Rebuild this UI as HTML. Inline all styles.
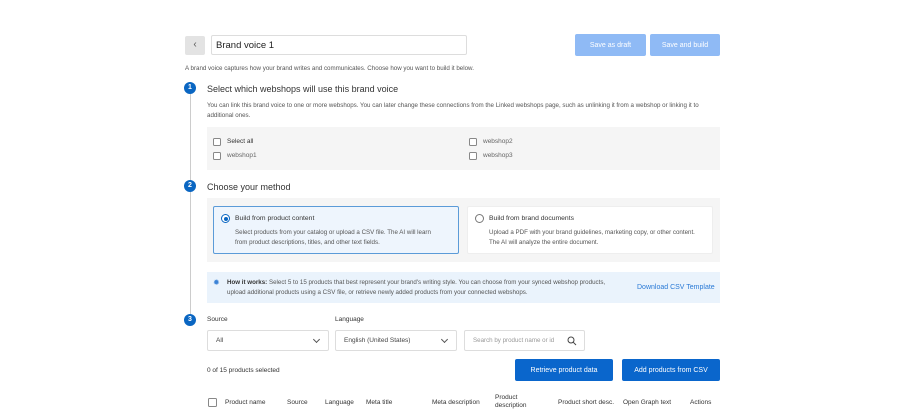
<!DOCTYPE html>
<html><head><style>
*{box-sizing:border-box;margin:0;padding:0}
body{width:910px;height:415px;background:#fff;font-family:"Liberation Sans",sans-serif;color:#333;position:relative;overflow:hidden}
.a{position:absolute}
.cb{position:absolute;width:8px;height:8px;border:1px solid #888;border-radius:1.5px;background:#fff}
.step{position:absolute;width:12px;height:12px;border-radius:50%;background:#0a66c2;color:#fff;font-size:7px;font-weight:bold;text-align:center;line-height:12px;left:184px}
.h{position:absolute;left:207px;font-size:9px;color:#333}
.t{font-size:6.2px;color:#555;line-height:10px}
.btn{position:absolute;color:#fff;font-size:7px;text-align:center;border-radius:2px;padding-top:2px}
.sel{position:absolute;border:1px solid #ddd;border-radius:2px;height:21px;font-size:6.5px;color:#444;line-height:19px;padding-left:8px;background:#fff}
.chev{position:absolute;right:9px;top:6px;width:5px;height:5px;border-right:1px solid #555;border-bottom:1px solid #555;transform:rotate(45deg)}
.th{position:absolute;top:398px;font-size:6.5px;color:#333;line-height:8px}
</style></head><body>
<div class="a" style="left:185px;top:36px;width:20px;height:19px;background:#e3e3e3;border-radius:2px;color:#555;font-size:10px;text-align:center;line-height:18px">‹</div>
<div class="a" style="left:211px;top:35px;width:256px;height:20px;border:1px solid #ddd;border-radius:2px;font-size:9.5px;line-height:19px;padding-left:4px;color:#222">Brand voice 1</div>
<div class="btn" style="left:575px;top:34px;width:71px;height:22px;background:#8fbaf5;line-height:20px">Save as draft</div>
<div class="btn" style="left:650px;top:34px;width:70px;height:22px;background:#8fbaf5;line-height:20px">Save and build</div>
<div class="a t" style="left:185px;top:64px">A brand voice captures how your brand writes and communicates. Choose how you want to build it below.</div>

<div class="a" style="left:190px;top:92px;width:1px;height:226px;background:#ccc"></div>
<div class="step" style="top:82px">1</div>
<div class="h" style="top:84px">Select which webshops will use this brand voice</div>
<div class="a t" style="left:207px;top:101px;width:515px">You can link this brand voice to one or more webshops. You can later change these connections from the Linked webshops page, such as unlinking it from a webshop or linking it to additional ones.</div>
<div class="a" style="left:207px;top:127px;width:513px;height:43px;background:#f5f5f5"></div>
<div class="cb" style="left:213px;top:138px"></div><div class="a" style="left:227px;top:138px;font-size:6.5px;color:#333">Select all</div>
<div class="cb" style="left:213px;top:152px"></div><div class="a" style="left:227px;top:152px;font-size:6.5px;color:#666">webshop1</div>
<div class="cb" style="left:469px;top:138px"></div><div class="a" style="left:483px;top:138px;font-size:6.5px;color:#666">webshop2</div>
<div class="cb" style="left:469px;top:152px"></div><div class="a" style="left:483px;top:152px;font-size:6.5px;color:#666">webshop3</div>

<div class="step" style="top:180px">2</div>
<div class="h" style="top:182px">Choose your method</div>
<div class="a" style="left:207px;top:198px;width:513px;height:64px;background:#f5f5f5"></div>
<div class="a" style="left:213px;top:206px;width:246px;height:48px;background:#eef5fd;border:1px solid #5b9bd8;border-radius:2px"></div>
<div class="a" style="left:221px;top:214px;width:9px;height:9px;border:1px solid #0a66c2;border-radius:50%;background:#fff"><div style="margin:1.5px;width:4px;height:4px;border-radius:50%;background:#0a66c2"></div></div>
<div class="a" style="left:235px;top:215px;font-size:6.8px;color:#333">Build from product content</div>
<div class="a t" style="left:235px;top:228px">Select products from your catalog or upload a CSV file. The AI will learn<br>from product descriptions, titles, and other text fields.</div>
<div class="a" style="left:467px;top:206px;width:246px;height:48px;background:#fff;border:1px solid #eee;border-radius:2px"></div>
<div class="a" style="left:475px;top:214px;width:9px;height:9px;border:1px solid #777;border-radius:50%"></div>
<div class="a" style="left:489px;top:215px;font-size:6.8px;color:#333">Build from brand documents</div>
<div class="a t" style="left:489px;top:228px">Upload a PDF with your brand guidelines, marketing copy, or other content.<br>The AI will analyze the entire document.</div>

<div class="a" style="left:207px;top:272px;width:513px;height:31px;background:#eaf3fc"></div>
<div class="a" style="left:213px;top:278px;font-size:8px;color:#3b82d6">✹</div>
<div class="a t" style="left:227px;top:278px"><b style="color:#333">How it works:</b> Select 5 to 15 products that best represent your brand's writing style. You can choose from your synced webshop products,<br>upload additional products using a CSV file, or retrieve newly added products from your connected webshops.</div>
<div class="a" style="left:637px;top:284px;font-size:7px;color:#2a7ad6">Download CSV Template</div>

<div class="step" style="top:314px">3</div>
<div class="a" style="left:207px;top:316px;font-size:6.5px;color:#333">Source</div>
<div class="a" style="left:335px;top:316px;font-size:6.5px;color:#333">Language</div>
<div class="sel" style="left:207px;top:330px;width:122px">All<div class="chev"></div></div>
<div class="sel" style="left:335px;top:330px;width:122px">English (United States)<div class="chev"></div></div>
<div class="sel" style="left:464px;top:330px;width:121px;color:#999;font-size:6.2px">Search by product name or id
<svg class="a" style="right:7px;top:5px" width="10" height="10" viewBox="0 0 10 10"><circle cx="4" cy="4" r="3" fill="none" stroke="#444" stroke-width="1"/><path d="M6.2 6.2L9 9" stroke="#444" stroke-width="1"/></svg></div>
<div class="a" style="left:207px;top:367px;font-size:6.5px;color:#333">0 of 15 products selected</div>
<div class="btn" style="left:515px;top:359px;width:98px;height:22px;background:#0a66cc;line-height:20px">Retrieve product data</div>
<div class="btn" style="left:622px;top:359px;width:98px;height:22px;background:#0a66cc;line-height:20px">Add products from CSV</div>

<div class="cb" style="left:208px;top:398px;width:9px;height:9px"></div>
<div class="th" style="left:225px;top:399px">Product name</div>
<div class="th" style="left:287px;top:399px">Source</div>
<div class="th" style="left:325px;top:399px">Language</div>
<div class="th" style="left:366px;top:399px">Meta title</div>
<div class="th" style="left:432px;top:399px">Meta description</div>
<div class="th" style="left:495px;top:394px">Product<br>description</div>
<div class="th" style="left:558px;top:399px">Product short desc.</div>
<div class="th" style="left:623px;top:399px">Open Graph text</div>
<div class="th" style="left:690px;top:399px">Actions</div>
</body></html>
